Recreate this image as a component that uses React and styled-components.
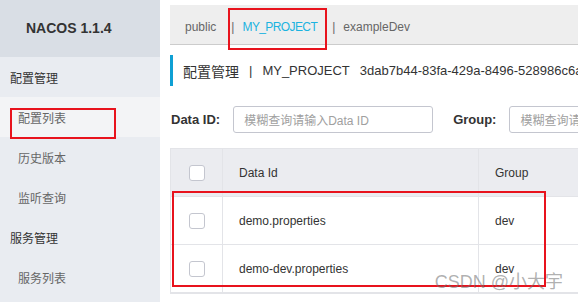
import styled, { createGlobalStyle } from "styled-components";

const GlobalStyle = createGlobalStyle`
  html, body {
    margin: 0;
    padding: 0;
    background: #fff;
    font-family: "Liberation Sans", "Noto Sans CJK SC", sans-serif;
  }
`;

const Page = styled.div`
  position: relative;
  display: flex;
  width: 578px;
  height: 302px;
  overflow: hidden;
`;

const Sidebar = styled.div`
  width: 160px;
  flex-shrink: 0;
  background: #e9ecf1;
  display: flex;
  flex-direction: column;
`;

const Brand = styled.div`
  height: 57px;
  background: #d9dee5;
  display: flex;
  align-items: center;
  padding-left: 26px;
  padding-bottom: 2px;
  box-sizing: border-box;
  font-size: 14px;
  font-weight: bold;
  color: #333;
`;

const MenuGroup = styled.div`
  height: 40px;
  display: flex;
  align-items: center;
  padding-left: 10px;
  font-size: 12px;
  color: #333;
`;

const MenuItem = styled.div`
  height: 40px;
  display: flex;
  align-items: center;
  padding-left: 18px;
  font-size: 12px;
  color: #666;
  background: ${(p) => (p.active ? "#f3f4f6" : "transparent")};
`;

const Main = styled.div`
  flex: 1;
  min-width: 0;
  padding: 5px 0 0 10px;
  overflow: hidden;
`;

const TabBar = styled.div`
  height: 40px;
  background: #eeeeee;
  border-bottom: 1px solid #cccccc;
  display: flex;
  align-items: center;
  padding: 5px 0 0 15px;
  box-sizing: border-box;
  font-size: 12px;
  color: #666;
  white-space: nowrap;
`;

const Tab = styled.span`
  color: ${(p) => (p.active ? "#1bb3e0" : "#666")};
  margin-right: 15px;
  letter-spacing: ${(p) => (p.active ? "-0.6px" : "0")};
`;

const Sep = styled.span`
  color: #666;
  margin-right: 8px;
`;

const Title = styled.div`
  margin-top: 10px;
  height: 31px;
  border-left: 3px solid #0fa0d4;
  padding-left: 10px;
  display: flex;
  align-items: center;
  font-size: 13px;
  color: #333;
  white-space: nowrap;
`;

const TitleCn = styled.span`
  font-size: 14px;
`;

const TitleSep = styled.span`
  margin: 0 10px;
`;

const TitleId = styled.span`
  margin-left: 10px;
`;

const Filters = styled.div`
  margin-top: 20px;
  height: 27px;
  display: flex;
  align-items: center;
  white-space: nowrap;
`;

const Label = styled.span`
  font-size: 13px;
  font-weight: bold;
  color: #333;
  margin: 0 ${(p) => p.gap}px 0 ${(p) => p.lead}px;
`;

const Input = styled.div`
  width: ${(p) => p.w}px;
  height: 27px;
  flex-shrink: 0;
  border: 1px solid #c4c6cf;
  border-radius: 3px;
  box-sizing: border-box;
  display: flex;
  align-items: center;
  padding-left: 10px;
  font-size: 12px;
  color: #a0a0a0;
  overflow: hidden;
`;

const Table = styled.div`
  margin-top: 15px;
  width: 520px;
  border: 1px solid #e3e4e8;
  border-right: none;
  font-size: 12px;
  color: #333;
`;

const Row = styled.div`
  display: grid;
  grid-template-columns: 52px 256px 1fr;
  height: 48px;
  background: ${(p) => (p.head ? "#ebecf0" : "#fff")};
  border-bottom: 1px solid #e3e4e8;
  box-sizing: border-box;
`;

const Cell = styled.div`
  display: flex;
  align-items: center;
  justify-content: ${(p) => (p.center ? "center" : "flex-start")};
  padding-left: ${(p) => (p.center ? 0 : 16)}px;
  border-right: 1px solid #e3e4e8;
`;

const Check = styled.span`
  width: 16px;
  height: 16px;
  box-sizing: border-box;
  border: 1px solid #c4c6cf;
  border-radius: 3px;
  background: #fff;
`;

const Mark = styled.div`
  position: absolute;
  left: ${(p) => p.x}px;
  top: ${(p) => p.y}px;
  width: ${(p) => p.w}px;
  height: ${(p) => p.h}px;
  border: 2px solid #e8131d;
  box-sizing: border-box;
  pointer-events: none;
`;

const Watermark = styled.div`
  position: absolute;
  right: 15px;
  bottom: 9px;
  font-size: 18px;
  color: rgba(110, 110, 110, 0.55);
  white-space: nowrap;
`;

const rows = [
  { id: "demo.properties", group: "dev" },
  { id: "demo-dev.properties", group: "dev" },
];

export default function App() {
  return (
    <>
      <GlobalStyle />
      <Page>
        <Sidebar>
          <Brand>NACOS 1.1.4</Brand>
          <MenuGroup>配置管理</MenuGroup>
          <MenuItem active>配置列表</MenuItem>
          <MenuItem>历史版本</MenuItem>
          <MenuItem>监听查询</MenuItem>
          <MenuGroup>服务管理</MenuGroup>
          <MenuItem>服务列表</MenuItem>
        </Sidebar>
        <Main>
          <TabBar>
            <Tab>public</Tab>
            <Sep>|</Sep>
            <Tab active>MY_PROJECT</Tab>
            <Sep>|</Sep>
            <Tab>exampleDev</Tab>
          </TabBar>
          <Title>
            <TitleCn>配置管理</TitleCn>
            <TitleSep>|</TitleSep>
            <span>MY_PROJECT</span>
            <TitleId>3dab7b44-83fa-429a-8496-528986c6a1e2</TitleId>
          </Title>
          <Filters>
            <Label lead={1} gap={13}>Data ID:</Label>
            <Input w={200}>模糊查询请输入Data ID</Input>
            <Label lead={20} gap={13}>Group:</Label>
            <Input w={120}>模糊查询请输入Group</Input>
          </Filters>
          <Table>
            <Row head>
              <Cell center>
                <Check />
              </Cell>
              <Cell>Data Id</Cell>
              <Cell>Group</Cell>
            </Row>
            {rows.map((r) => (
              <Row key={r.id}>
                <Cell center>
                  <Check />
                </Cell>
                <Cell>{r.id}</Cell>
                <Cell>{r.group}</Cell>
              </Row>
            ))}
          </Table>
        </Main>
        <Mark x={10} y={108} w={106} h={31} />
        <Mark x={228} y={8} w={99} h={42} />
        <Mark x={172} y={191} w={374} h={96} />
        <Watermark>CSDN @小大宇</Watermark>
      </Page>
    </>
  );
}
